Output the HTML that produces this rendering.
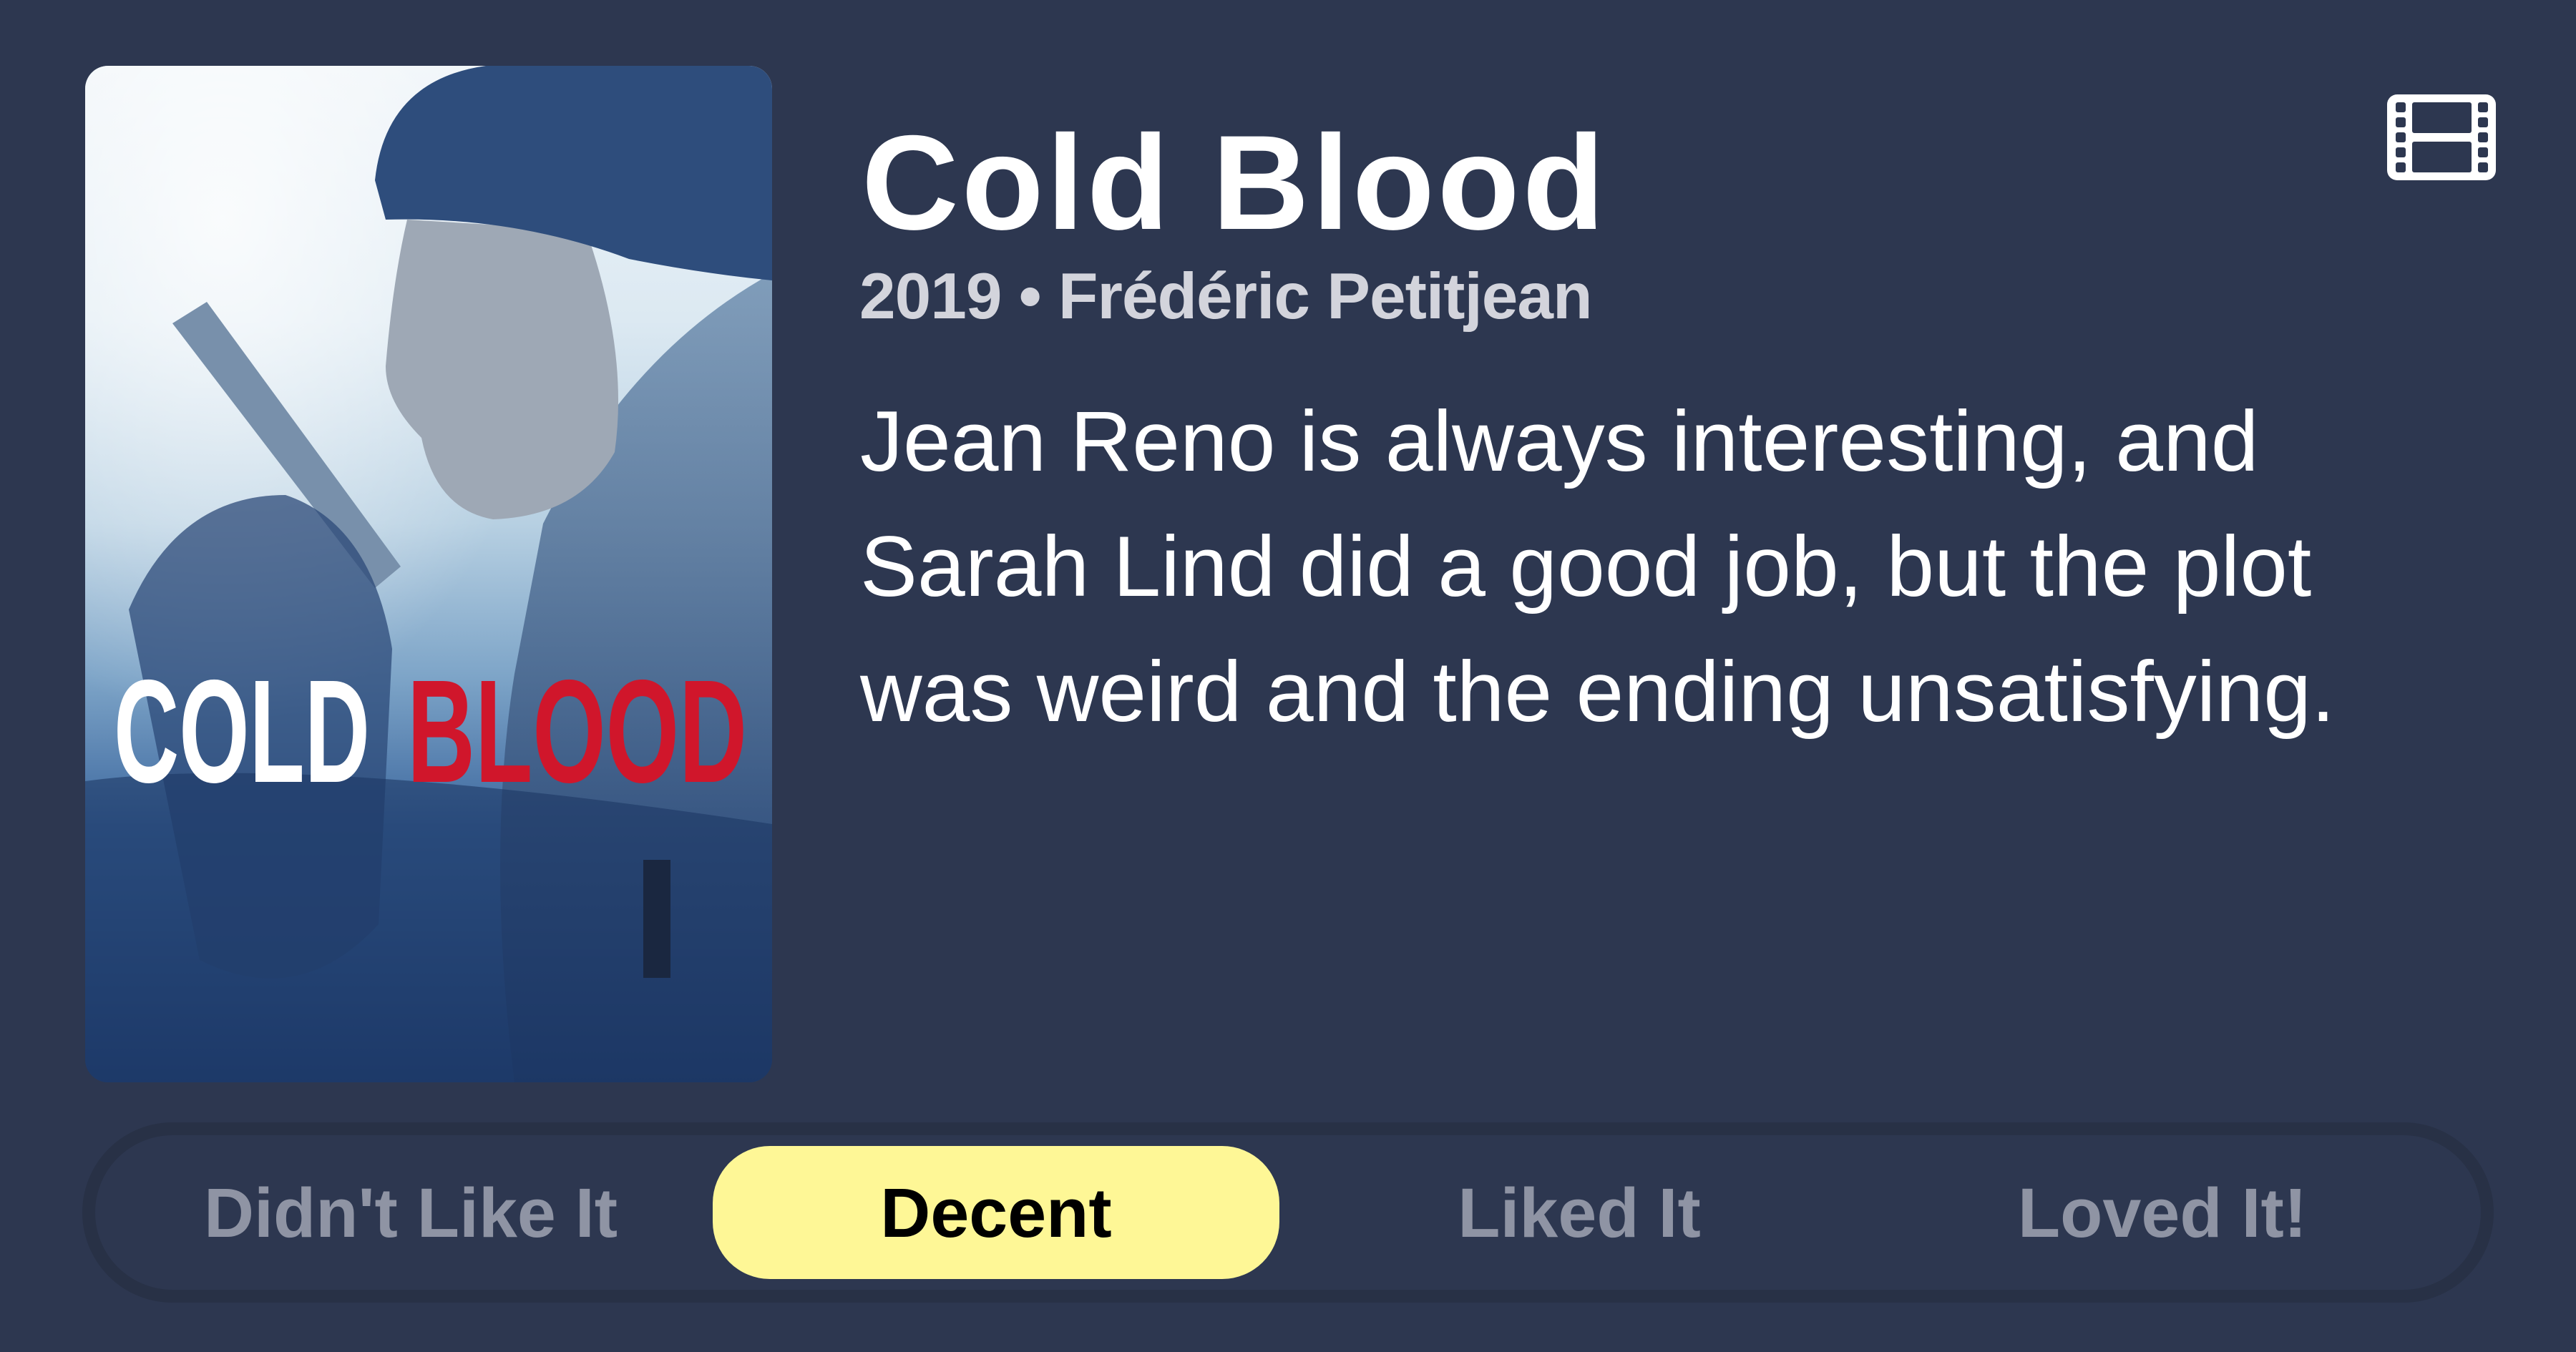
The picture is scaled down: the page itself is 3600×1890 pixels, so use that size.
<!DOCTYPE html>
<html><head><meta charset="utf-8"><style>
*{margin:0;padding:0;box-sizing:border-box}
html,body{width:3600px;height:1890px;overflow:hidden;background:#2d3750;font-family:"Liberation Sans",sans-serif}
.abs{position:absolute}
#poster{left:119px;top:92px;width:960px;height:1421px;border-radius:32px;overflow:hidden;background:linear-gradient(180deg,#eef4f8 0%,#dce9f2 25%,#b7d0e2 45%,#7ea5c8 60%,#3c679e 75%,#1f3e70 100%)}
.title{left:1204px;top:140px;font-size:188px;font-weight:bold;color:#fff;letter-spacing:4px;line-height:230px;white-space:nowrap}
.sub{left:1201px;top:362px;font-size:91px;font-weight:bold;color:#d3d4dc;line-height:105px;white-space:nowrap;letter-spacing:-1px}
.body{left:1202px;top:530px;font-size:120px;color:#fff;line-height:175px;white-space:nowrap}
#bar{left:115px;top:1569px;width:3370px;height:252px;border:18px solid #283146;border-radius:126px}
#pill{left:996px;top:1602px;width:792px;height:186px;border-radius:80px;background:#fef796}
.lbl{top:1638px;font-size:97px;font-weight:bold;color:#8f94a4;line-height:115px;white-space:nowrap;transform:translateX(-50%)}
</style></head><body>
<div id="poster" class="abs">
<svg width="960" height="1421" viewBox="0 0 960 1421" style="position:absolute;left:0;top:0">
<defs>
<radialGradient id="fog" cx="0.2" cy="0.15" r="0.5"><stop offset="0" stop-color="#ffffff" stop-opacity="0.8"/><stop offset="1" stop-color="#ffffff" stop-opacity="0"/></radialGradient>
<linearGradient id="coat" x1="0" y1="0" x2="0" y2="1"><stop offset="0" stop-color="#6f8fb0"/><stop offset="1" stop-color="#1d3866"/></linearGradient>
</defs>
<rect width="960" height="1421" fill="url(#fog)"/>
<path d="M640 640 Q760 400 960 290 L960 1421 L600 1421 Q560 1100 600 850 Z" fill="url(#coat)" opacity="0.85"/>
<path d="M420 420 Q430 300 450 215 L700 230 Q760 400 740 540 Q690 630 570 634 Q490 620 470 520 Q420 470 420 420 Z" fill="#9ea8b5"/>
<path d="M405 160 Q420 20 560 0 L960 0 L960 300 Q860 290 760 270 Q600 210 420 215 Z" fill="#2e4d7c"/>
<path d="M122 360 L170 330 L441 700 L405 730 Z" fill="#7890ab"/>
<path d="M61 760 Q130 600 280 600 Q400 640 429 815 L410 1200 Q300 1320 160 1250 Z" fill="#2c4a78" opacity="0.75"/>
<path d="M0 1000 Q300 960 960 1060 L960 1421 L0 1421 Z" fill="#1c3764" opacity="0.6"/>
<rect x="780" y="1110" width="38" height="165" fill="#1a2740"/>
<text x="40" y="1001" font-family="Liberation Sans" font-weight="bold" font-size="205" fill="#ffffff" textLength="358" lengthAdjust="spacingAndGlyphs">COLD</text>
<text x="450" y="1001" font-family="Liberation Sans" font-weight="bold" font-size="205" fill="#d0162b" textLength="475" lengthAdjust="spacingAndGlyphs">BLOOD</text>
</svg>
</div>
<div class="abs title">Cold Blood</div>
<div class="abs sub">2019 • Frédéric Petitjean</div>
<div class="abs body">Jean Reno is always interesting, and<br>Sarah Lind did a good job, but the plot<br>was weird and the ending unsatisfying.</div>
<svg class="abs" style="left:3336px;top:132px" width="152" height="120" viewBox="0 0 152 120">
<rect x="0" y="0" width="152" height="120" rx="14" fill="#fff"/>
<g fill="#2d3750">
<rect x="12" y="11" width="14" height="14" rx="3"/><rect x="12" y="32" width="14" height="14" rx="3"/><rect x="12" y="53" width="14" height="14" rx="3"/><rect x="12" y="74" width="14" height="14" rx="3"/><rect x="12" y="95" width="14" height="14" rx="3"/>
<rect x="127" y="11" width="14" height="14" rx="3"/><rect x="127" y="32" width="14" height="14" rx="3"/><rect x="127" y="53" width="14" height="14" rx="3"/><rect x="127" y="74" width="14" height="14" rx="3"/><rect x="127" y="95" width="14" height="14" rx="3"/>
<rect x="35" y="11" width="83" height="43" rx="3"/><rect x="35" y="66" width="83" height="43" rx="3"/>
</g></svg>
<div id="bar" class="abs"></div>
<div id="pill" class="abs"></div>
<div class="abs lbl" style="left:574px">Didn't Like It</div>
<div class="abs lbl" style="left:1392px;color:#000">Decent</div>
<div class="abs lbl" style="left:2207px">Liked It</div>
<div class="abs lbl" style="left:3022px">Loved It!</div>
</body></html>
